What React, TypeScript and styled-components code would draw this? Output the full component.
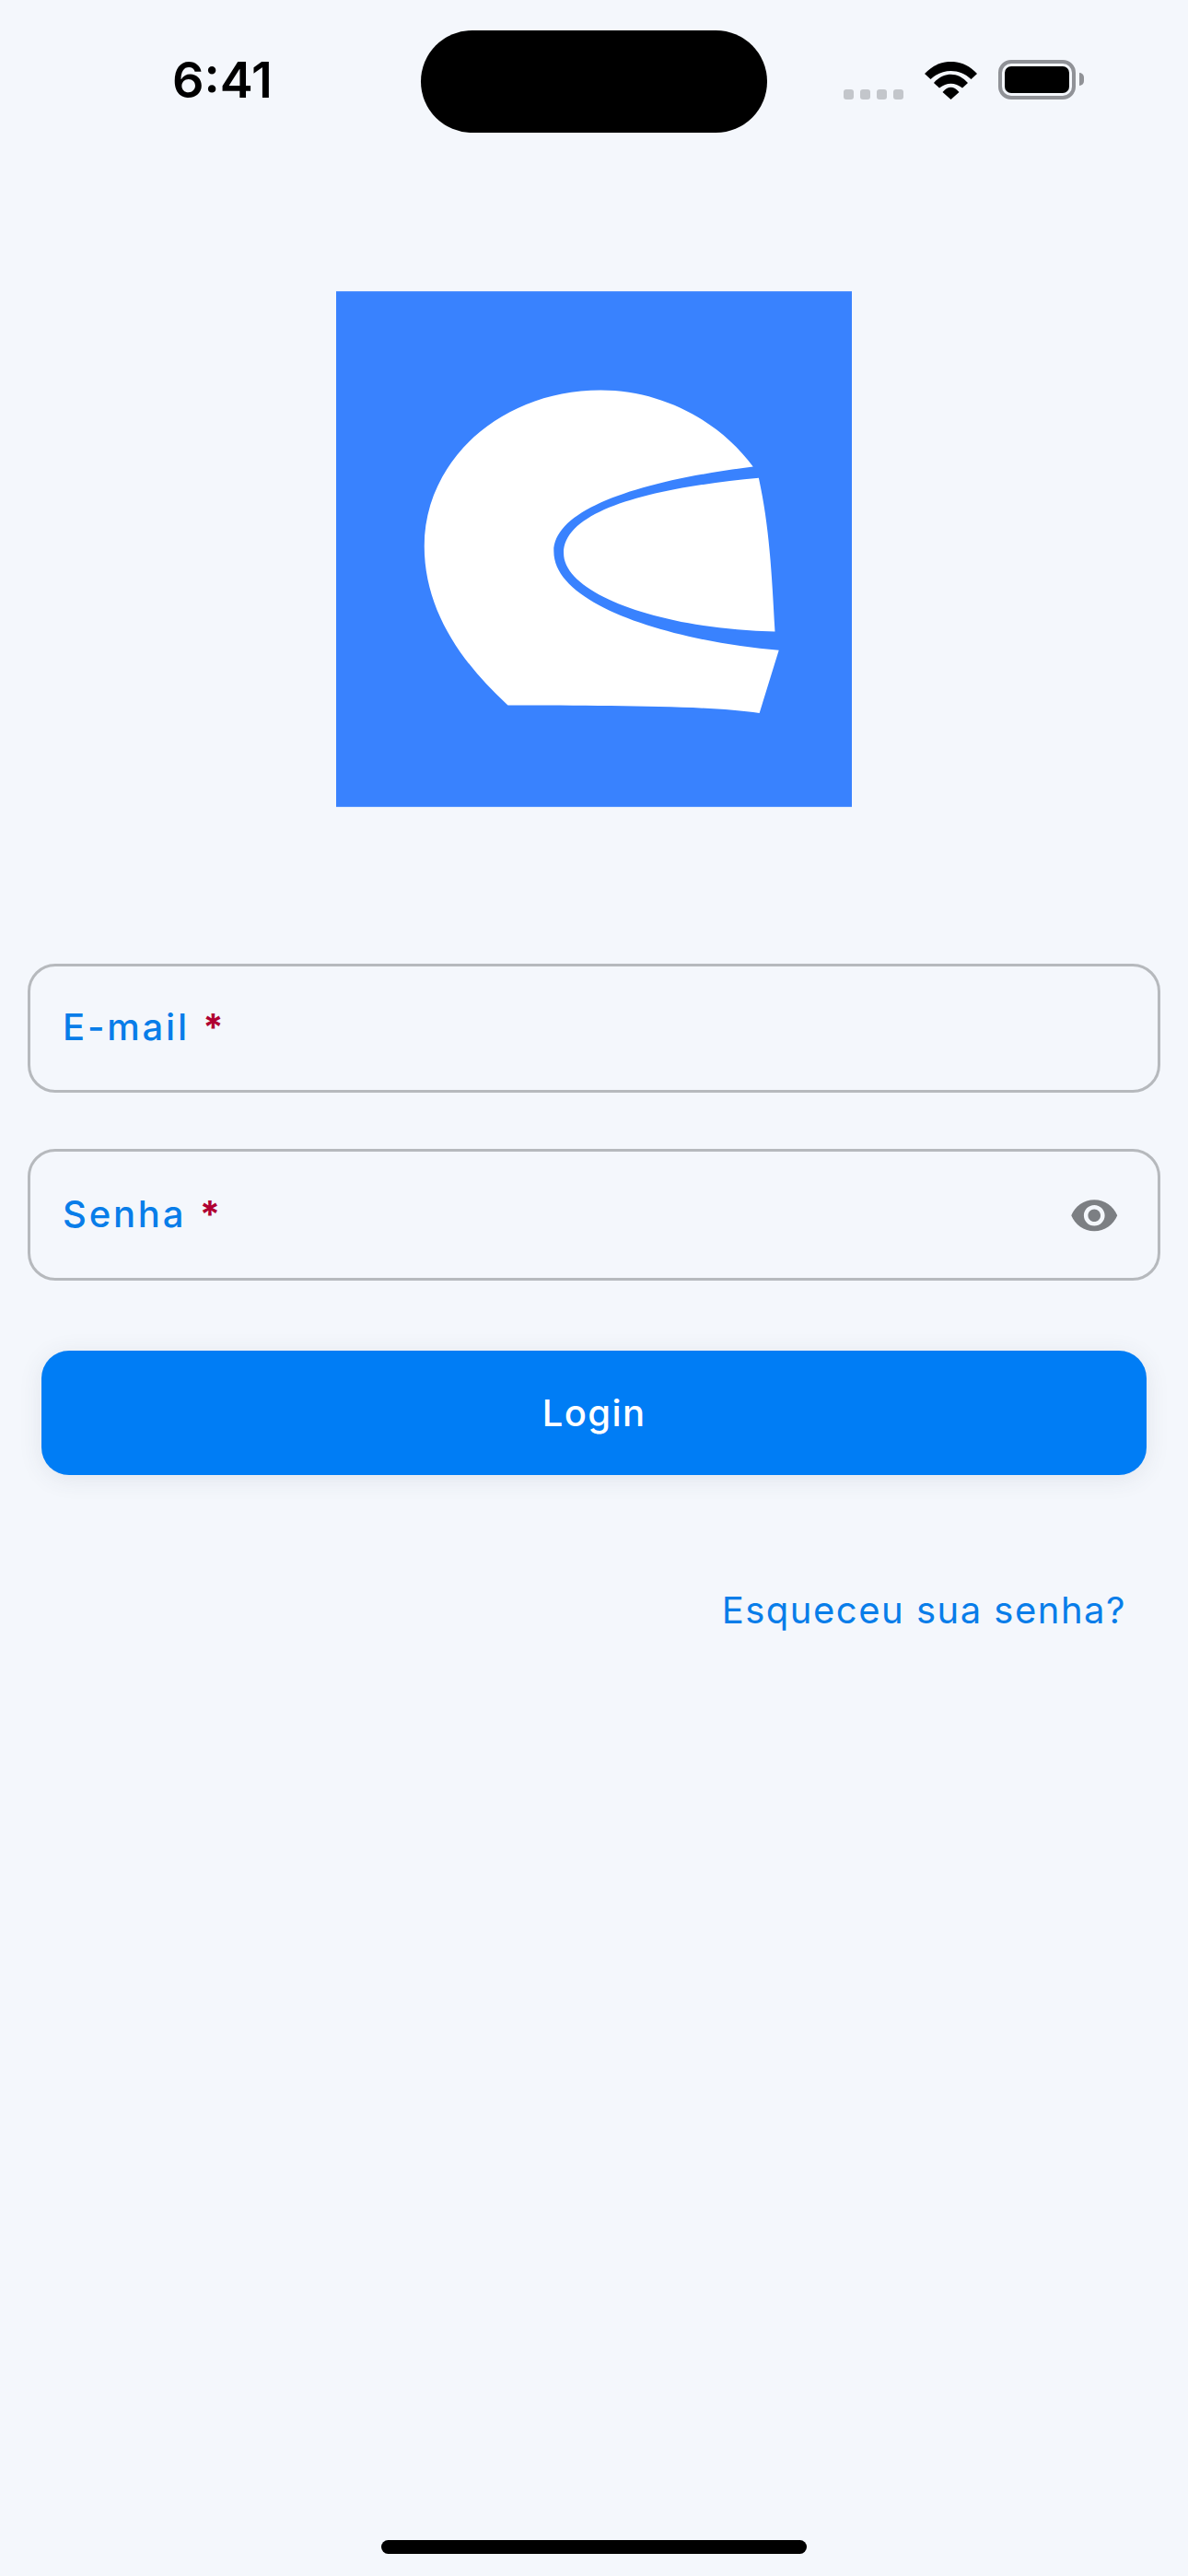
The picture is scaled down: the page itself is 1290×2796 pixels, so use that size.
import React from 'react'
import styled, { createGlobalStyle } from 'styled-components'
import { MdVisibility } from 'react-icons/md'

const GlobalStyle = createGlobalStyle`
  html, body {
    margin: 0;
    padding: 0;
    background: #f4f7fc;
  }
`

const Screen = styled.div`
  width: 1290px;
  height: 2796px;
  box-sizing: border-box;
  background: #f4f7fc;
  font-family: Inter, 'Liberation Sans', sans-serif;
  display: flex;
  flex-direction: column;
  overflow: hidden;
`

const StatusBar = styled.div`
  height: 111px;
  margin-top: 33px;
  display: grid;
  grid-template-columns: 457px 376px 1fr;
`

const Clock = styled.div`
  padding: 24px 0 0 187px;
  font-size: 54px;
  line-height: 60px;
  font-weight: 600;
  color: #000;
`

const Island = styled.div`
  background: #000;
  border-radius: 56px;
`

const StatusIcons = styled.div`
  padding: 32px 0 0 83px;
  display: flex;
  align-items: flex-end;
  height: 43px;
`

const SignalDots = styled.div`
  display: flex;
  gap: 7px;
  margin-right: 23px;
`

const Dot = styled.span`
  width: 11px;
  height: 11px;
  border-radius: 3px;
  background: #c3c6cb;
`

const WifiIcon = styled.svg`
  width: 57px;
  height: 41px;
  margin-right: 23px;
`

const Battery = styled.div`
  width: 84px;
  height: 43px;
  box-sizing: border-box;
  border: 4px solid #909297;
  border-radius: 14px;
  padding: 3px;
  display: flex;
  position: relative;

  &::after {
    content: '';
    position: absolute;
    right: -13px;
    top: 10px;
    width: 5px;
    height: 14px;
    background: #909297;
    border-radius: 0 5px 5px 0;
  }
`

const BatteryFill = styled.div`
  flex: 1;
  background: #000;
  border-radius: 7px;
`

const LogoWrap = styled.div`
  display: flex;
  justify-content: center;
  margin-top: 172px;
`

const Logo = styled.svg`
  width: 560px;
  height: 560px;
  display: block;
`

const Form = styled.div`
  margin-top: 170px;
  padding: 0 30px;
  display: flex;
  flex-direction: column;
`

const Field = styled.div<{ $height: number; $gap: number }>`
  height: ${(p) => p.$height}px;
  margin-bottom: ${(p) => p.$gap}px;
  box-sizing: border-box;
  border: 3px solid #b6b9bd;
  border-radius: 30px;
  padding: 0 35px 2px;
  display: flex;
  align-items: center;
  justify-content: space-between;
`

const FieldLabel = styled.label`
  font-size: 40px;
  line-height: 48px;
  font-weight: 500;
  letter-spacing: 2.8px;
  color: #087de9;
`

const Required = styled.span`
  color: #b00032;
  font-weight: 700;
  margin-left: 1px;
`

const EyeButton = styled.span`
  display: flex;
  color: #7c7f83;
  font-size: 54.5px;
  margin: 4px 7px 0 0;
`

const LoginButton = styled.button`
  height: 135px;
  margin: 0 15px;
  border: none;
  border-radius: 30px;
  background: #007df5;
  color: #fff;
  font-family: inherit;
  font-size: 40px;
  font-weight: 500;
  letter-spacing: 1.4px;
  box-shadow: 0 4px 26px rgba(60, 70, 90, 0.1);
`

const ForgotRow = styled.div`
  display: flex;
  justify-content: flex-end;
  margin-top: 122px;
  padding-right: 37px;
`

const ForgotLink = styled.a`
  font-size: 40px;
  line-height: 50px;
  letter-spacing: 1.5px;
  color: #087de9;
`

const HomeIndicator = styled.div`
  width: 462px;
  height: 15px;
  border-radius: 8px;
  background: #000;
  margin: auto auto 24px;
`

export default function App(): React.ReactElement {
  return (
    <Screen>
      <GlobalStyle />
      <StatusBar>
        <Clock>6:41</Clock>
        <Island />
        <StatusIcons>
          <SignalDots>
            <Dot />
            <Dot />
            <Dot />
            <Dot />
          </SignalDots>
          <WifiIcon viewBox="0 0 57 41">
            <path d="M0 13 C16 -4.5 41 -4.5 57 13 L50.5 19 C38 7 19 7 6.5 19 Z" fill="#000" />
            <path d="M10 23 C20.5 10.5 36.5 10.5 47 23 L41 28.5 C33 22 24 22 16 28.5 Z" fill="#000" />
            <path d="M19.5 33 C25.5 26 31.5 26 37.5 33 L28.5 41 Z" fill="#000" />
          </WifiIcon>
          <Battery>
            <BatteryFill />
          </Battery>
        </StatusIcons>
      </StatusBar>

      <LogoWrap>
        <Logo viewBox="40 43 1462 1461">
          <rect x="40" y="43" width="1462" height="1461" fill="#3982fe" />
          <path
            fill="#fff"
            d="M1222 540 C1130 415 970 323 790 323 C510 323 290 520 290 765 C290 950 400 1100 527 1216 C800 1218 1080 1215 1240 1238 L1295 1060 C1000 1035 657 935 657 780 C657 660 900 580 1222 540 Z"
          />
          <path
            fill="#fff"
            d="M1238 572 C950 598 685 660 685 785 C685 900 960 1000 1284 1007 C1275 840 1268 710 1238 572 Z"
          />
        </Logo>
      </LogoWrap>

      <Form>
        <Field $height={140} $gap={61}>
          <FieldLabel>
            E-mail <Required>*</Required>
          </FieldLabel>
        </Field>
        <Field $height={143} $gap={76}>
          <FieldLabel>
            Senha <Required>*</Required>
          </FieldLabel>
          <EyeButton>
            <MdVisibility />
          </EyeButton>
        </Field>
        <LoginButton>Login</LoginButton>
        <ForgotRow>
          <ForgotLink>Esqueceu sua senha?</ForgotLink>
        </ForgotRow>
      </Form>

      <HomeIndicator />
    </Screen>
  )
}
